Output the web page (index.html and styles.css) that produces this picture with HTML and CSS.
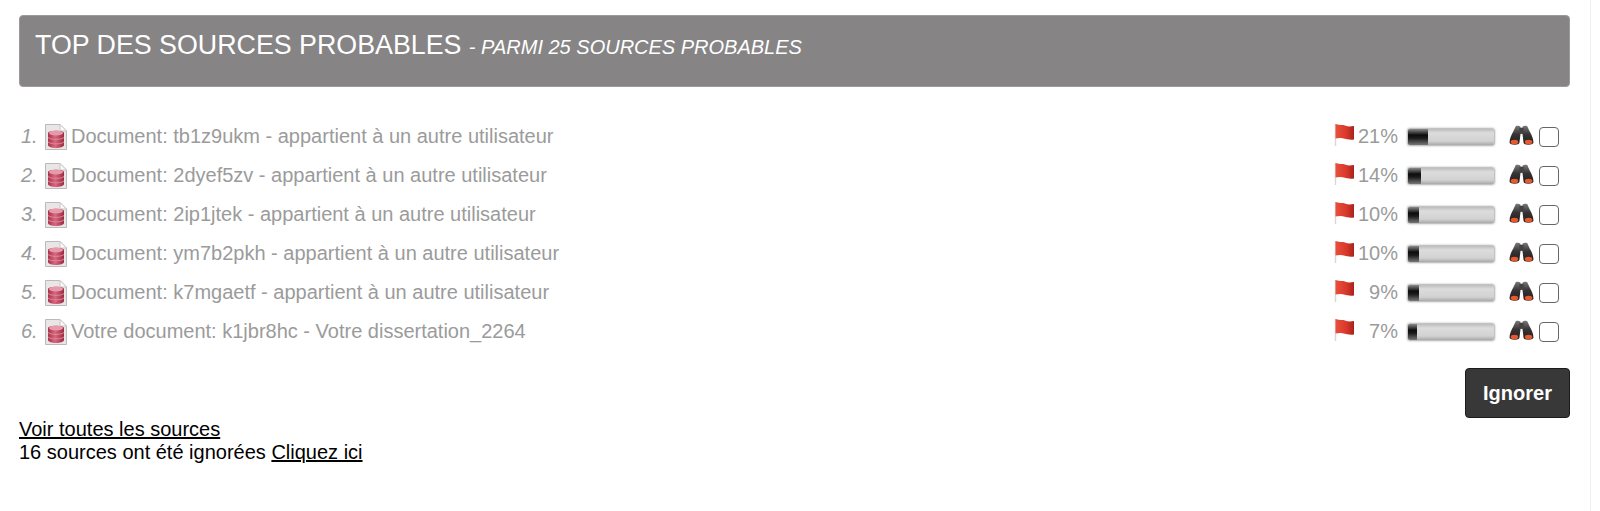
FILE: index.html
```html
<!DOCTYPE html>
<html lang="fr">

<head>
    <meta charset="UTF-8">
    <title>Top des sources probables</title>
    <link rel="stylesheet" href="styles.css">
</head>

<body>
    <svg class="defs" width="0" height="0">
        <defs>
            <linearGradient id="dbgrad" x1="0" x2="1" y1="0" y2="0">
                <stop offset="0" stop-color="#a8324c"/>
                <stop offset="0.45" stop-color="#d9687e"/>
                <stop offset="1" stop-color="#9a2a42"/>
            </linearGradient>
            <linearGradient id="flaggrad" x1="0" x2="1" y1="0" y2="0">
                <stop offset="0" stop-color="#e8503c"/>
                <stop offset="0.6" stop-color="#d8382a"/>
                <stop offset="1" stop-color="#a8221a"/>
            </linearGradient>
            <linearGradient id="barrelgrad" x1="0" x2="0" y1="0" y2="1">
                <stop offset="0" stop-color="#7a7878"/>
                <stop offset="0.45" stop-color="#363434"/>
                <stop offset="1" stop-color="#1e1c1c"/>
            </linearGradient>
            <symbol id="doc" viewBox="0 0 24 28">
                <path d="M1.500 1.500H16L22.500 8V26.500H1.500Z" fill="#e9e6e6" stroke="#bdb9ba"/>
                <path d="M16 1.500V8H22.500Z" fill="#fbfbfb" stroke="#c9c5c6"/>
                <path d="M4 10C4 7 20 7 20 10V22C20 26 4 26 4 22Z" fill="url(#dbgrad)"/>
                <ellipse cx="12" cy="10" rx="7" ry="2.500" fill="#e79aaa"/>
                <path d="M4 14.500C7 17 17 17 20 14.500M4 19C7 21.500 17 21.500 20 19" fill="none" stroke="#dd8a9c" stroke-width="1"/>
            </symbol>
            <symbol id="flag" viewBox="0 0 21 24">
                <path d="M1.500 1V23" stroke="#dcd7d6" stroke-width="1.500"/>
                <path d="M1.500 1C6 2.500 9 1.500 11 2.500C14 4 17 3.500 20 3V16.500C16 17 13 16.500 10 15.500C7 14.500 5 15 1.500 15.500Z" fill="url(#flaggrad)"/>
            </symbol>
            <symbol id="binoc" viewBox="0 0 24 20">
                <path d="M6.500 1C8 .5 10 .5 11 1.500V9L10 17C10 19.500 1 19.500 .5 17C.5 13 2.500 9 4 6.500Z" fill="url(#barrelgrad)"/>
                <path d="M17.500 1C16 .5 14 .5 13 1.500V9L14 17C14 19.500 23 19.500 23.500 17C23.500 13 21.500 9 20 6.500Z" fill="url(#barrelgrad)"/>
                <rect x="10" y="2.500" width="4" height="6" fill="#444242"/>
                <ellipse cx="5.200" cy="16.300" rx="3.600" ry="2.300" fill="#e8582e"/>
                <ellipse cx="18.800" cy="16.300" rx="3.600" ry="2.300" fill="#e8582e"/>
            </symbol>
        </defs>
    </svg>

    <div class="page">
        <div class="header">
            TOP DES SOURCES PROBABLES <span class="sub">- PARMI 25 SOURCES PROBABLES</span>
        </div>

        <ul class="sources">
            <li class="source">
                <i class="num">1.</i>
                <svg class="doc-icon"><use href="#doc"/></svg>
                <span class="name">Document: tb1z9ukm - appartient à un autre utilisateur</span>
                <svg class="flag-icon"><use href="#flag"/></svg>
                <span class="pct">21%</span>
                <span class="bar"><span class="fill" style="width: 20px"></span></span>
                <svg class="binoc-icon"><use href="#binoc"/></svg>
                <span class="check"></span>
            </li>
            <li class="source">
                <i class="num">2.</i>
                <svg class="doc-icon"><use href="#doc"/></svg>
                <span class="name">Document: 2dyef5zv - appartient à un autre utilisateur</span>
                <svg class="flag-icon"><use href="#flag"/></svg>
                <span class="pct">14%</span>
                <span class="bar"><span class="fill" style="width: 13px"></span></span>
                <svg class="binoc-icon"><use href="#binoc"/></svg>
                <span class="check"></span>
            </li>
            <li class="source">
                <i class="num">3.</i>
                <svg class="doc-icon"><use href="#doc"/></svg>
                <span class="name">Document: 2ip1jtek - appartient à un autre utilisateur</span>
                <svg class="flag-icon"><use href="#flag"/></svg>
                <span class="pct">10%</span>
                <span class="bar"><span class="fill" style="width: 11px"></span></span>
                <svg class="binoc-icon"><use href="#binoc"/></svg>
                <span class="check"></span>
            </li>
            <li class="source">
                <i class="num">4.</i>
                <svg class="doc-icon"><use href="#doc"/></svg>
                <span class="name">Document: ym7b2pkh - appartient à un autre utilisateur</span>
                <svg class="flag-icon"><use href="#flag"/></svg>
                <span class="pct">10%</span>
                <span class="bar"><span class="fill" style="width: 11px"></span></span>
                <svg class="binoc-icon"><use href="#binoc"/></svg>
                <span class="check"></span>
            </li>
            <li class="source">
                <i class="num">5.</i>
                <svg class="doc-icon"><use href="#doc"/></svg>
                <span class="name">Document: k7mgaetf - appartient à un autre utilisateur</span>
                <svg class="flag-icon"><use href="#flag"/></svg>
                <span class="pct">9%</span>
                <span class="bar"><span class="fill" style="width: 11px"></span></span>
                <svg class="binoc-icon"><use href="#binoc"/></svg>
                <span class="check"></span>
            </li>
            <li class="source">
                <i class="num">6.</i>
                <svg class="doc-icon"><use href="#doc"/></svg>
                <span class="name">Votre document: k1jbr8hc - Votre dissertation_2264</span>
                <svg class="flag-icon"><use href="#flag"/></svg>
                <span class="pct">7%</span>
                <span class="bar"><span class="fill" style="width: 9px"></span></span>
                <svg class="binoc-icon"><use href="#binoc"/></svg>
                <span class="check"></span>
            </li>
        </ul>

        <div class="actions">
            <button class="btn">Ignorer</button>
        </div>

        <div class="links">
            <a href="#">Voir toutes les sources</a><br>
            16 sources ont été ignorées <a href="#">Cliquez ici</a>
        </div>
    </div>
</body>

</html>
```

FILE: styles.css
```css
body {
    margin: 0;
    padding: 0;
    background: #fff;
    font-family: "Liberation Sans", Arial, sans-serif;
    overflow: hidden;
}

.defs {
    display: block;
    height: 0;
}

.page {
    box-sizing: border-box;
    width: 1591px;
    height: 511px;
    padding: 15px 20px 0 19px;
    border-right: 1px solid #f0f0f0;
}

.header {
    box-sizing: border-box;
    height: 72px;
    padding: 14px 15px 0;
    background: #868485;
    border: 1px solid #9c9a9b;
    border-radius: 4px;
    color: #fff;
    font-size: 26.8px;
    line-height: 30px;
}

.sub {
    font-size: 20px;
    font-style: italic;
}

.sources {
    list-style: none;
    margin: 30px 0 0;
    padding: 0;
}

.source {
    display: flex;
    align-items: center;
    height: 39px;
    padding-right: 11px;
    color: #9b9b9b;
    font-size: 20px;
}

.num {
    width: 23px;
    margin-left: 2px;
}

.doc-icon,
.flag-icon,
.binoc-icon {
    filter: blur(0.5px);
}

.doc-icon {
    width: 24px;
    height: 28px;
    margin-right: 3px;
}

.name {
    flex: 1;
}

.flag-icon {
    width: 21px;
    height: 24px;
    margin-top: -4px;
}

.pct {
    width: 43px;
    text-align: right;
}

.bar {
    box-sizing: border-box;
    width: 88px;
    height: 18px;
    margin-left: 9px;
    background: linear-gradient(#bdbdbd, #dcdcdc 25%, #d2d2d2 75%, #a9a9a9);
    border: 1px solid #c2c2c2;
    border-radius: 3px;
    box-shadow: 0 0 2px #aaa;
    overflow: hidden;
}

.fill {
    display: block;
    height: 100%;
    background: linear-gradient(#8a8a8a, #0c0c0c 38%, #1c1c1c 58%, #777);
}

.binoc-icon {
    width: 25px;
    height: 21px;
    margin-left: 14px;
    margin-top: -3px;
}

.check {
    box-sizing: border-box;
    width: 20px;
    height: 20px;
    margin-left: 5px;
    border: 1px solid #666;
    border-radius: 4px;
    background: #fff;
}

.actions {
    display: flex;
    justify-content: flex-end;
    margin-top: 17px;
}

.btn {
    width: 105px;
    height: 50px;
    background: #383838;
    border: 1px solid #1c1c1c;
    border-radius: 4px;
    color: #fff;
    font-family: "Liberation Sans", Arial, sans-serif;
    font-size: 20px;
    font-weight: bold;
}

.links {
    margin-top: 0;
    color: #000;
    font-size: 20px;
    line-height: 23px;
}

.links a {
    color: #000;
}
```
